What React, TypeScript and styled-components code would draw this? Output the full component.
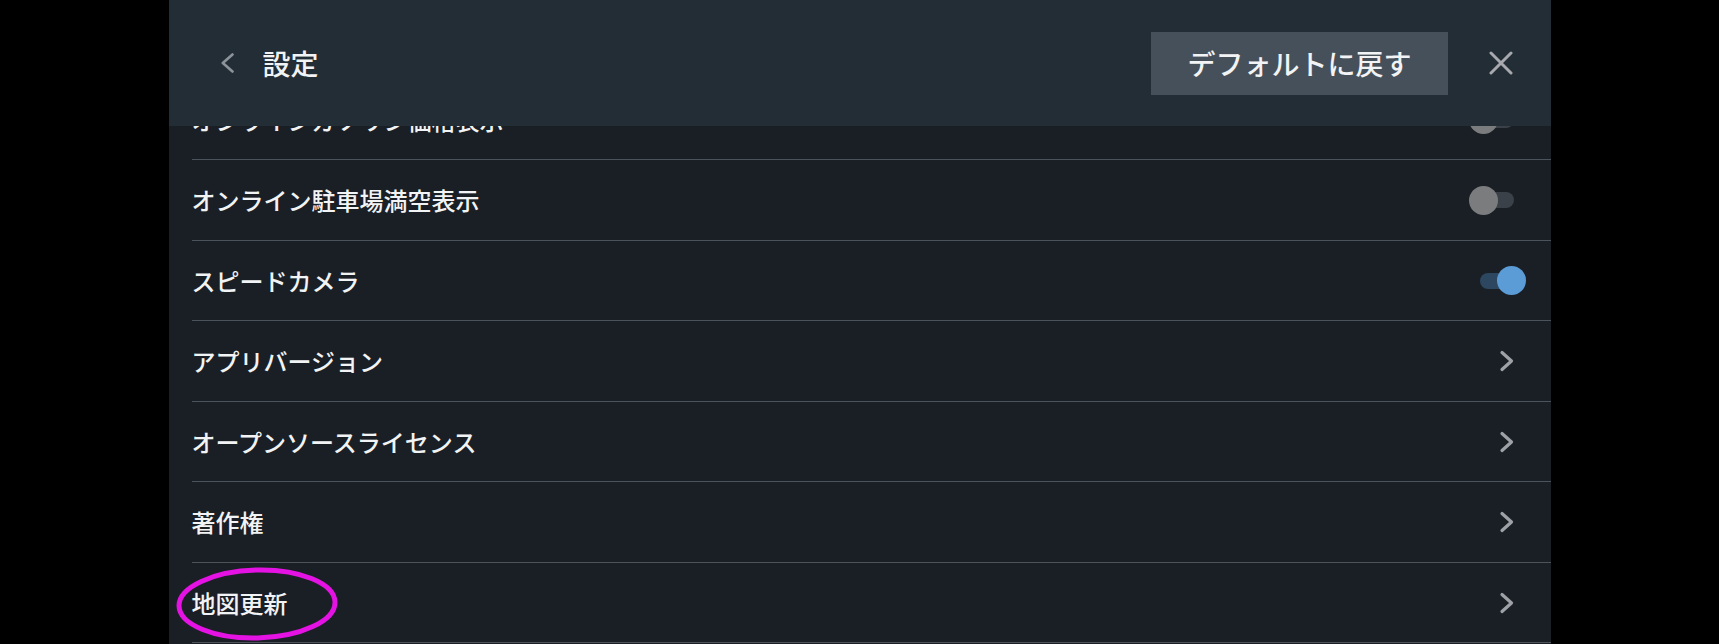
import React from "react";
import styled, { createGlobalStyle } from "styled-components";

const GlobalStyle = createGlobalStyle`
  html, body {
    margin: 0;
    padding: 0;
    background: #000;
  }
  body {
    font-family: "Noto Sans CJK JP", "Noto Sans", sans-serif;
    -webkit-font-smoothing: antialiased;
  }
  * { box-sizing: border-box; }
`;

const Screen = styled.div`
  width: 1719px;
  height: 644px;
  background: #000;
  display: flex;
  justify-content: center;
  overflow: hidden;
`;

const Panel = styled.div`
  width: 1382px;
  height: 644px;
  background: #1a1f26;
  display: flex;
  flex-direction: column;
  overflow: hidden;
`;

const Header = styled.header`
  flex: 0 0 126px;
  height: 126px;
  background: #232d36;
  display: flex;
  align-items: center;
  padding: 0 38px 0 52px;
  position: relative;
  z-index: 1;
`;

const BackButton = styled.button`
  background: none;
  border: none;
  padding: 0;
  width: 14px;
  height: 22px;
  display: flex;
  align-items: center;
  justify-content: center;
  cursor: pointer;
`;

const Title = styled.h1`
  margin: 0 0 0 28px;
  font-size: 28px;
  font-weight: 500;
  color: #f2f3f4;
  letter-spacing: 0;
  flex: 1;
  line-height: 1;
`;

const ResetButton = styled.button`
  height: 63px;
  padding: 0 36px;
  background: #46505a;
  border: none;
  color: #f2f3f4;
  font-family: "Noto Sans CJK JP", "Noto Sans", sans-serif;
  font-size: 28px;
  font-weight: 500;
  line-height: 1;
  cursor: pointer;
`;

const CloseButton = styled.button`
  background: none;
  border: none;
  padding: 0;
  margin-left: 41px;
  width: 24px;
  height: 24px;
  display: flex;
  align-items: center;
  justify-content: center;
  cursor: pointer;
`;

const Viewport = styled.div`
  flex: 1;
  overflow: hidden;
`;

const List = styled.ul`
  list-style: none;
  margin: -46.5px 0 0 0;
  padding: 0;
`;

const Row = styled.li`
  position: relative;
  height: 80.5px;
  display: flex;
  align-items: center;
  padding: 0 37px 0 23px;
  &::after {
    content: "";
    position: absolute;
    left: 23px;
    right: 0;
    bottom: 0;
    height: 1px;
    background: #4d535a;
  }
`;

const Label = styled.span`
  flex: 1;
  font-size: 24px;
  font-weight: 500;
  color: #f2f3f4;
  line-height: 1;
  white-space: nowrap;
`;

const Track = styled.span<{ $on: boolean }>`
  position: relative;
  display: block;
  width: 34px;
  height: 16px;
  border-radius: 8px;
  background: ${(p) => (p.$on ? "#2d4760" : "#3b4148")};
`;

const Knob = styled.span<{ $on: boolean }>`
  position: absolute;
  top: -6.5px;
  left: ${(p) => (p.$on ? "17px" : "-11px")};
  width: 29px;
  height: 29px;
  border-radius: 50%;
  background: ${(p) => (p.$on ? "#5b9bd6" : "#7b7c7e")};
`;

const ChevronBox = styled.span`
  display: flex;
  width: 16px;
  height: 22px;
  margin-right: -1px;
`;

const Annotation = styled.svg`
  position: absolute;
  left: 5px;
  top: 2px;
  width: 166px;
  height: 78px;
  overflow: visible;
  pointer-events: none;
  transform: rotate(-1.5deg);
`;

const Toggle = ({ on }: { on: boolean }) => (
  <Track $on={on}>
    <Knob $on={on} />
  </Track>
);

const Chevron = () => (
  <ChevronBox>
    <svg width="16" height="22" viewBox="0 0 16 22">
      <path
        d="M3 2.5 L12.5 11 L3 19.5"
        fill="none"
        stroke="#9ea2a7"
        strokeWidth="3.2"
        strokeLinecap="round"
        strokeLinejoin="round"
      />
    </svg>
  </ChevronBox>
);

type Item = {
  label: string;
  kind: "toggle" | "link";
  on?: boolean;
  marked?: boolean;
};

const items: Item[] = [
  { label: "オンラインガソリン価格表示", kind: "toggle", on: false },
  { label: "オンライン駐車場満空表示", kind: "toggle", on: false },
  { label: "スピードカメラ", kind: "toggle", on: true },
  { label: "アプリバージョン", kind: "link" },
  { label: "オープンソースライセンス", kind: "link" },
  { label: "著作権", kind: "link" },
  { label: "地図更新", kind: "link", marked: true },
];

export default function App() {
  return (
    <>
      <GlobalStyle />
      <Screen>
        <Panel>
          <Header>
            <BackButton aria-label="戻る">
              <svg width="14" height="22" viewBox="0 0 14 22">
                <path
                  d="M11.5 2.5 L1.8 11 L11.5 19.5"
                  fill="none"
                  stroke="#8c939a"
                  strokeWidth="2.6"
                  strokeLinecap="round"
                  strokeLinejoin="round"
                />
              </svg>
            </BackButton>
            <Title>設定</Title>
            <ResetButton>デフォルトに戻す</ResetButton>
            <CloseButton aria-label="閉じる">
              <svg width="24" height="24" viewBox="0 0 24 24">
                <path
                  d="M2 2 L22 22 M22 2 L2 22"
                  fill="none"
                  stroke="#a8a9ae"
                  strokeWidth="3"
                  strokeLinecap="round"
                />
              </svg>
            </CloseButton>
          </Header>
          <Viewport>
            <List>
              {items.map((it) => (
                <Row key={it.label}>
                  <Label>{it.label}</Label>
                  {it.kind === "toggle" ? <Toggle on={!!it.on} /> : <Chevron />}
                  {it.marked && (
                    <Annotation viewBox="0 0 166 78">
                      <ellipse
                        cx="83"
                        cy="39"
                        rx="78"
                        ry="34"
                        fill="none"
                        stroke="#e413e4"
                        strokeWidth="5"
                      />
                    </Annotation>
                  )}
                </Row>
              ))}
            </List>
          </Viewport>
        </Panel>
      </Screen>
    </>
  );
}
